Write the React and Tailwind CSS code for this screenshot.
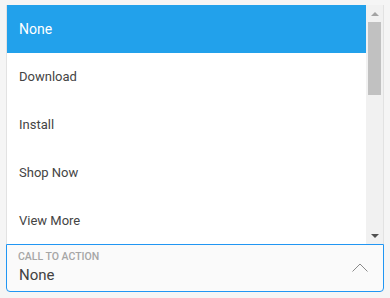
import React from 'react';

const options = ['None', 'Download', 'Install', 'Shop Now', 'View More'];

const App = () => {
    const selected = 'None';

    return (
        <div
            className="w-[390px] h-[298px] bg-[#f5f5f5] pt-[5px] px-[6px] overflow-hidden"
            style={{ fontFamily: 'Roboto, "Liberation Sans", sans-serif' }}
        >
            <div className="h-[239px] flex bg-white border-x border-[#e2e2e2] overflow-hidden">
                <ul className="flex-1">
                    {options.map((opt) => (
                        <li
                            key={opt}
                            className={
                                opt === selected
                                    ? 'h-[48px] flex items-center pl-[12px] bg-[#22a1eb] text-white text-[14px]'
                                    : 'h-[48px] flex items-center pl-[12px] text-[#444444] text-[13px]'
                            }
                        >
                            {opt}
                        </li>
                    ))}
                </ul>

                {/* scrollbar */}
                <div className="w-[17px] bg-[#f1f1f1] flex flex-col items-center">
                    <div className="h-[17px] flex items-center justify-center">
                        <div className="w-0 h-0 border-x-[4px] border-x-transparent border-b-[4px] border-b-[#a3a3a3]" />
                    </div>
                    <div className="w-[13px] h-[73px] bg-[#c1c1c1]" />
                    <div className="flex-1" />
                    <div className="h-[17px] flex items-center justify-center">
                        <div className="w-0 h-0 border-x-[4px] border-x-transparent border-t-[4px] border-t-[#505050]" />
                    </div>
                </div>
            </div>

            <div className="h-[48px] border border-[#2196f3] rounded-b-[4px] bg-[#fafafa] flex items-center pl-[11px] pr-[15px]">
                <div className="flex-1 flex flex-col">
                    <span className="text-[10.5px] leading-[12px] font-medium text-[#a6a6a6] uppercase">Call to action</span>
                    <span className="text-[15px] leading-[20px] text-[#424242] mt-[2px] pl-[1px]">None</span>
                </div>
                <svg width="16" height="9" viewBox="0 0 16 9" className="mb-[2px]">
                    <path d="M0.5 8.5 L8 1 L15.5 8.5" fill="none" stroke="#8a8a8a" strokeWidth="1" />
                </svg>
            </div>
        </div>
    );
};

export default App;
